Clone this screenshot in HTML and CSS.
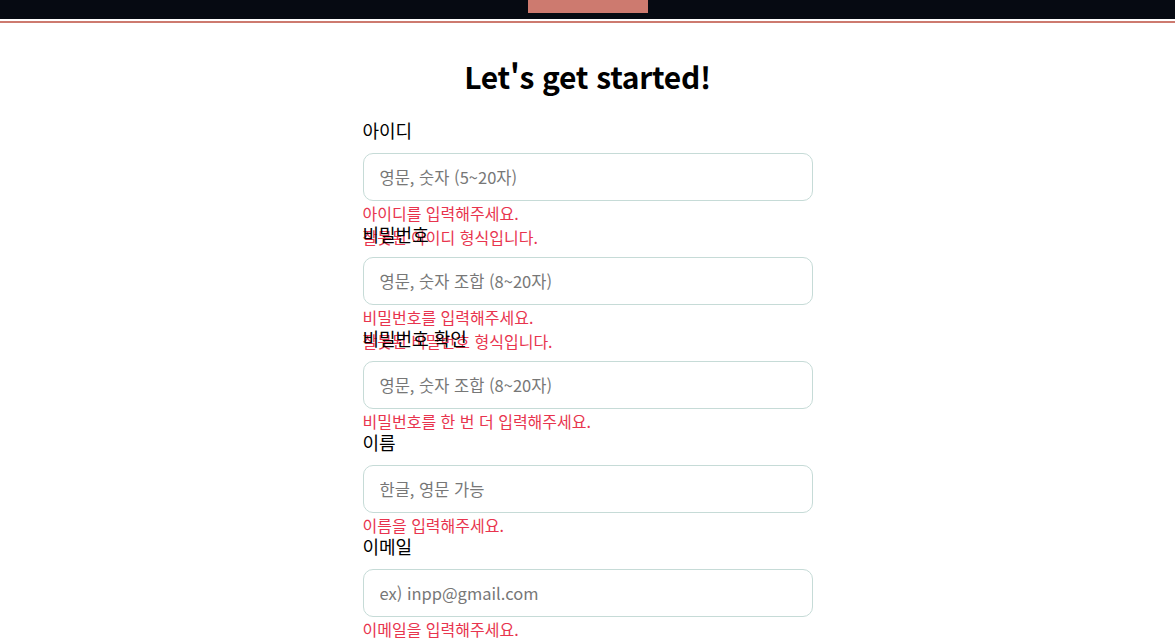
FILE: index.html
```html
<!DOCTYPE html>
<html lang="ko">
<head>
  <meta charset="UTF-8" />
  <meta name="viewport" content="width=device-width, initial-scale=1" />
  <title>회원가입</title>
  <link rel="stylesheet" href="styles.css">
</head>
<body>
  <header class="topbar">
    <div class="logo"></div>
  </header>
  <div class="topline"></div>

  <main class="signup">
    <h1>Let's get started!</h1>

    <div class="field">
      <label for="userId">아이디</label>
      <input type="text" id="userId" placeholder="영문, 숫자 (5~20자)" />
      <div class="errors">
        <p>아이디를 입력해주세요.</p>
        <p>잘못된 아이디 형식입니다.</p>
      </div>
    </div>

    <div class="field">
      <label for="pw">비밀번호</label>
      <input type="password" id="pw" placeholder="영문, 숫자 조합 (8~20자)" />
      <div class="errors">
        <p>비밀번호를 입력해주세요.</p>
        <p>잘못된 비밀번호 형식입니다.</p>
      </div>
    </div>

    <div class="field">
      <label for="pwCheck">비밀번호 확인</label>
      <input type="password" id="pwCheck" placeholder="영문, 숫자 조합 (8~20자)" />
      <div class="errors">
        <p>비밀번호를 한 번 더 입력해주세요.</p>
      </div>
    </div>

    <div class="field">
      <label for="name">이름</label>
      <input type="text" id="name" placeholder="한글, 영문 가능" />
      <div class="errors">
        <p>이름을 입력해주세요.</p>
      </div>
    </div>

    <div class="field">
      <label for="email">이메일</label>
      <input type="email" id="email" placeholder="ex) inpp@gmail.com" />
      <div class="errors">
        <p>이메일을 입력해주세요.</p>
      </div>
    </div>
  </main>
</body>
</html>
```

FILE: styles.css
```css
body {
  margin: 0;
  font-family: "Noto Sans CJK KR", "Noto Sans", sans-serif;
  color: #000;
  background: #fff;
}
.topbar {
  height: 19px;
  background: #060a12;
  display: flex;
  justify-content: center;
}
.logo {
  width: 120px;
  height: 13px;
  background: #cd7a6f;
}
.topline {
  height: 2px;
  margin-top: 2px;
  background: #cd7a6f;
}
.signup {
  width: 450px;
  margin: 0 auto;
  padding-top: 32px;
}
h1 {
  margin: 0 0 23px;
  font-size: 30px;
  line-height: 42px;
  font-weight: bold;
  letter-spacing: -0.3px;
  text-align: center;
}
.field label {
  display: block;
  font-size: 18px;
  line-height: 20px;
  margin-bottom: 13px;
}
.field input {
  display: block;
  box-sizing: border-box;
  width: 100%;
  height: 48px;
  padding: 0 16px;
  border: 1px solid #c6dbd7;
  border-radius: 10px;
  font-family: inherit;
  font-size: 16.5px;
  outline: none;
}
.field input::placeholder {
  color: #777;
}
.errors {
  height: 23px;
}
.errors p {
  margin: 0;
  font-size: 16px;
  line-height: 24px;
  color: #e8344e;
}
```
